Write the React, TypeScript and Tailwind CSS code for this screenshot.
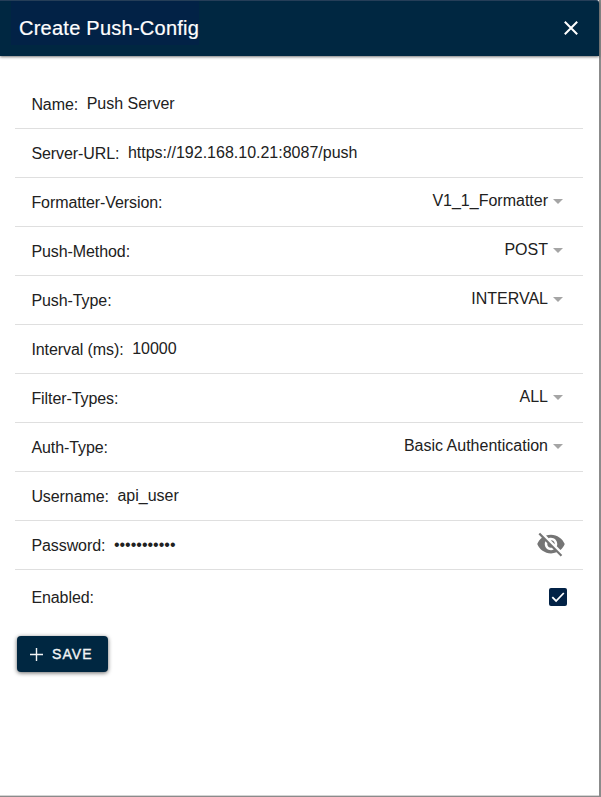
import type { ReactNode } from 'react';

function Row({ label, children }: { label: string; children?: ReactNode }) {
  return (
    <div className="flex h-[49px] items-center border-b border-[#dfdfdf] pl-4 pr-4">
      <label className="mt-px whitespace-nowrap pl-[0.4px] tracking-[-0.08px]">{label}</label>
      {children}
    </div>
  );
}

function Field({ label, value }: { label: string; value: string }) {
  return (
    <Row label={label}>
      <span className="-mt-px ml-[8.5px] whitespace-nowrap">{value}</span>
    </Row>
  );
}

function Choice({ label, value }: { label: string; value: string }) {
  return (
    <Row label={label}>
      <span className="-mt-[3px] ml-auto whitespace-nowrap">{value}</span>
      <svg className="-mt-0.5 ml-[5px] mr-1 h-[5px] w-[10px]" viewBox="0 0 10 5">
        <path d="M0 0h10L5 5z" fill="#a5a5a5" />
      </svg>
    </Row>
  );
}

export default function App() {
  return (
    <div className="flex h-[797px] w-[601px] flex-col border-b border-r-2 border-b-[#8b8b8b] border-r-[#8b8b8b] bg-white font-['Liberation_Sans',Arial,sans-serif] text-base leading-6 text-[#212121]">
      <header className="flex h-14 shrink-0 items-stretch justify-between rounded-tr-[3px] border-t border-[#253e58] bg-[#002741] pl-[11px] pr-[21px] text-white shadow-[0_1px_3px_rgba(0,0,0,0.55)]">
        <h1 className="mb-[11px] bg-[#022246] pl-2 pt-[12px] text-[20px] leading-[30px] tracking-[0.25px] [-webkit-text-stroke:0.2px_white]">
          Create Push-Config
        </h1>
        <button className="-mt-px self-center" aria-label="Close">
          <svg className="block size-[14px]" viewBox="0 0 14 14">
            <path d="M.8.8l12.4 12.4M13.2.8L.8 13.2" stroke="white" strokeWidth="2" />
          </svg>
        </button>
      </header>
      <main className="flex grow flex-col border-b border-[#d4d4d4] pl-[15px] pr-4 pt-6">
        <Field label="Name:" value="Push Server" />
        <Field label="Server-URL:" value="https://192.168.10.21:8087/push" />
        <Choice label="Formatter-Version:" value="V1_1_Formatter" />
        <Choice label="Push-Method:" value="POST" />
        <Choice label="Push-Type:" value="INTERVAL" />
        <Field label="Interval (ms):" value="10000" />
        <Choice label="Filter-Types:" value="ALL" />
        <Choice label="Auth-Type:" value="Basic Authentication" />
        <Field label="Username:" value="api_user" />
        <Row label="Password:">
          <span className="-mt-px ml-[8.5px]">•••••••••••</span>
          <svg className="-mt-0.5 ml-auto mr-px size-[30px]" viewBox="0 0 24 24" fill="#757575">
            <path d="M12 7c2.76 0 5 2.24 5 5 0 .65-.13 1.26-.36 1.83l2.92 2.92c1.51-1.26 2.7-2.89 3.43-4.75-1.73-4.39-6-7.5-11-7.5-1.4 0-2.74.25-3.98.7l2.16 2.16C10.74 7.13 11.35 7 12 7zM2 4.27l2.28 2.28.46.46C3.08 8.3 1.78 10.02 1 12c1.73 4.39 6 7.5 11 7.5 1.55 0 3.03-.3 4.38-.84l.42.42L19.73 22 21 20.73 3.27 3 2 4.27zM7.53 9.8l1.55 1.55c-.05.21-.08.43-.08.65 0 1.66 1.34 3 3 3 .22 0 .44-.03.65-.08l1.55 1.55c-.67.33-1.41.53-2.2.53-2.76 0-5-2.24-5-5 0-.79.2-1.53.53-2.2zm4.31-.78l3.15 3.15.02-.16c0-1.66-1.34-3-3-3l-.17.01z" />
          </svg>
        </Row>
        <div className="flex h-[54px] items-center justify-between px-4">
          <label className="mt-px pl-[0.4px] tracking-[-0.08px]">Enabled:</label>
          <svg className="-mt-px size-[18px]" viewBox="0 0 18 18" role="checkbox" aria-checked="true">
            <rect width="18" height="18" rx="2" fill="#022246" />
            <path d="M3.3 9.2l3.8 3.8 7.7-8" fill="none" stroke="white" strokeWidth="1.8" />
          </svg>
        </div>
        <button className="ml-0.5 mt-3 flex h-9 w-[91px] items-center rounded bg-[#002741] pl-[13px] text-sm tracking-[1.1px] text-[#f2f4f5] shadow-[0_1px_4px_rgba(0,0,0,0.6)] [-webkit-text-stroke:0.35px_#f2f4f5]">
          <svg className="mr-[9px] size-[13px]" viewBox="0 0 13 13">
            <path d="M6.5 0v13M0 6.5h13" stroke="#f2f4f5" strokeWidth="1.4" />
          </svg>
          SAVE
        </button>
      </main>
    </div>
  );
}
